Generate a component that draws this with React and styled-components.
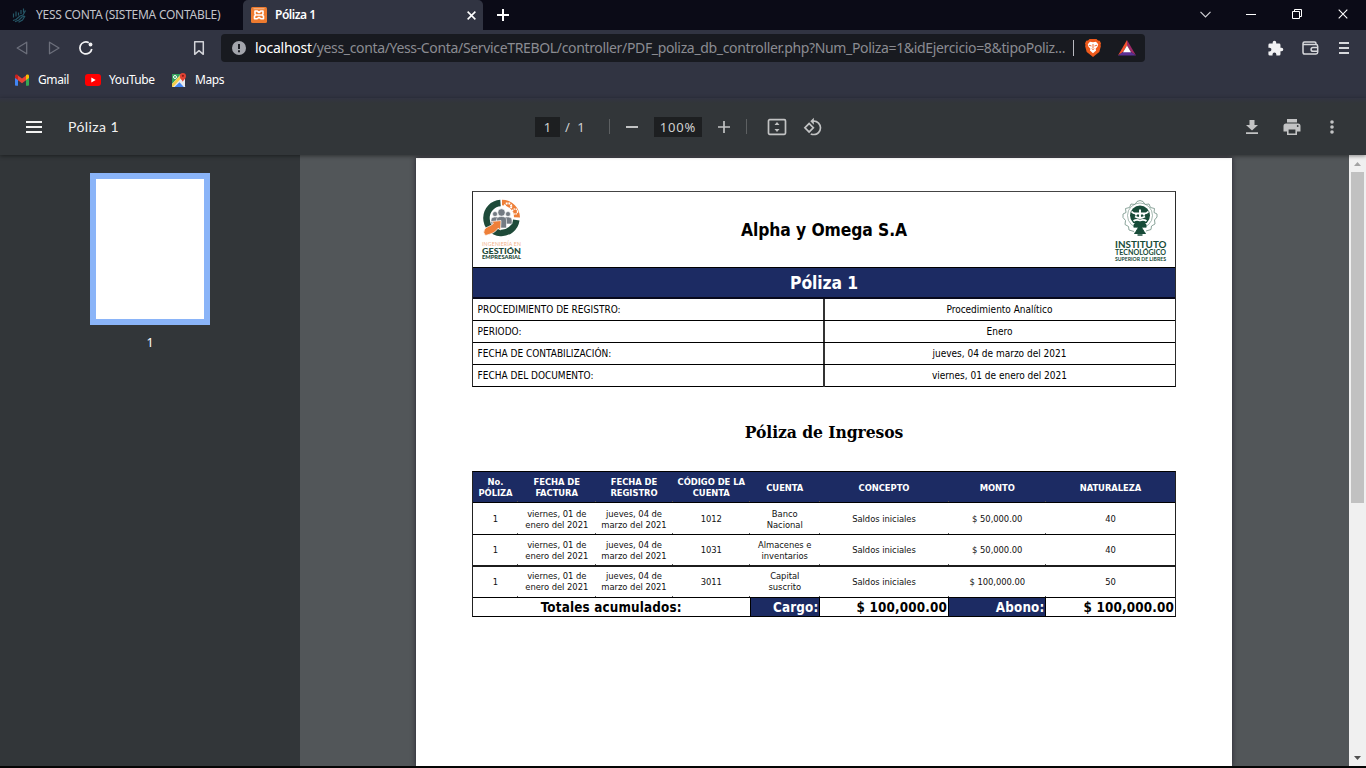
import React from "react";
import styled, { createGlobalStyle } from "styled-components";

const Global = createGlobalStyle`
  *, *::before, *::after { box-sizing: border-box; }
  html, body { margin: 0; padding: 0; overflow: hidden; background: #000; }
  svg { display: block; flex: none; }
`;

const NAVY = "#1c2b63";
const UI = `"Noto Sans", "Open Sans", sans-serif`;
const DOC = `"DejaVu Sans Condensed", "DejaVu Sans", sans-serif`;

const Window = styled.div`
  width: 1366px;
  height: 768px;
  display: flex;
  flex-direction: column;
  overflow: hidden;
  background: #000;
  font-family: ${UI};
  font-size: 12px;
  color: #fff;
  border-bottom: 2px solid #050505;
`;

/* Tab strip */
const TabStrip = styled.div`
  flex: none;
  display: flex;
  height: 30px;
  background: #0b0b17;
`;
const Tab = styled.div`
  display: flex;
  align-items: center;
  width: ${(p) => (p.$active ? 240 : 243)}px;
  padding: 0 ${(p) => (p.$active ? "7px 0 8px" : "0 0 12px")};
  gap: 8px;
  background: ${(p) => (p.$active ? "#313442" : "transparent")};
  border-radius: 5px 5px 0 0;
  color: ${(p) => (p.$active ? "#fff" : "#c3c4ca")};
`;
const TabTitle = styled.span`
  flex: 1;
  margin-top: -1px;
  white-space: nowrap;
  font-weight: ${(p) => (p.$active ? 600 : 400)};
  letter-spacing: ${(p) => p.$track || 0}px;
`;
const NewTab = styled.div`
  padding: 9px 0 0 14px;
  flex: 1;
`;
const WindowControls = styled.div`
  display: flex;
  align-items: center;
  > div {
    width: 46px;
    display: flex;
    justify-content: center;
    padding-bottom: 2px;
  }
`;

/* Navigation row */
const NavBar = styled.div`
  flex: none;
  display: flex;
  align-items: center;
  height: 36px;
  background: #313442;
`;
const NavButtons = styled.div`
  display: flex;
  align-items: center;
  width: 221px;
  padding: 0 15px 0 14px;
  gap: 16px;
`;
const Spacer = styled.div`
  flex: 1;
`;
const AddressBar = styled.div`
  display: flex;
  align-items: center;
  width: 924px;
  height: 28px;
  padding: 0 9px 0 11px;
  background: #181a20;
  border-radius: 4px;
`;
const Url = styled.div`
  flex: 1;
  margin-left: 9px;
  margin-top: -1px;
  white-space: nowrap;
  font-size: 14px;
  letter-spacing: -0.342px;
  color: #8b8c92;
  b { color: #fff; font-weight: 400; letter-spacing: -0.26px; }
`;
const UrlDivider = styled.div`
  width: 1px;
  height: 16px;
  margin-right: 11px;
  background: #b9bac0;
`;
const ShieldButton = styled.div`
  margin-right: 17px;
`;
const ExtensionIcons = styled.div`
  flex: 1;
  display: flex;
  align-items: center;
  justify-content: flex-end;
  padding-right: 17px;
  gap: 18px;
`;
const WalletButton = styled.div`
  margin-right: 2px;
`;

/* Bookmarks row */
const Bookmarks = styled.div`
  flex: none;
  display: flex;
  height: 32px;
  padding: 0 0 5px 14px;
  background: #313442;
`;
const Bookmark = styled.div`
  display: flex;
  align-items: center;
  width: ${(p) => p.$w}px;
  gap: 8px;
  letter-spacing: -0.4px;
`;

/* PDF toolbar */
const PdfToolbar = styled.div`
  flex: none;
  position: relative;
  z-index: 2;
  display: flex;
  align-items: center;
  height: 57px;
  background: linear-gradient(#323442, #323639 5px);
  box-shadow: 0 1px 4px rgba(0, 0, 0, 0.45);
  color: #d0d1d2;
`;
const PdfTitle = styled.div`
  display: flex;
  align-items: center;
  width: 535px;
  padding-left: 26px;
  gap: 26px;
  color: #f1f1f1;
  font-family: Lato, sans-serif;
  font-size: 14px;
  letter-spacing: 0.42px;
`;
const PdfControls = styled.div`
  flex: 1;
  display: flex;
  align-items: center;
  font-family: "Noto Sans", sans-serif;
  font-size: 13px;
`;
const PdfField = styled.div`
  width: ${(p) => p.$w}px;
  height: 20px;
  line-height: 20px;
  text-align: center;
  background: #1d1f21;
  letter-spacing: ${(p) => p.$track || 0}px;
`;
const PageCount = styled.div`
  width: 49px;
  padding-left: 5px;
  word-spacing: 4px;
`;
const PdfDivider = styled.div`
  width: 1px;
  height: 15px;
  background: #5d6062;
`;
const ControlGroup = styled.div`
  display: flex;
  align-items: center;
  justify-content: space-between;
  width: ${(p) => p.$w}px;
  padding: 0 ${(p) => p.$pad};
`;
const PdfActions = styled.div`
  display: grid;
  grid-template-columns: repeat(3, 40px);
  align-items: center;
  justify-items: center;
  padding-right: 14px;
`;

/* Body */
const Body = styled.div`
  flex: 1;
  min-height: 0;
  display: flex;
`;
const Sidebar = styled.div`
  width: 300px;
  padding-top: 18px;
  display: flex;
  flex-direction: column;
  align-items: center;
  background: #323639;
`;
const Thumbnail = styled.div`
  width: 120px;
  height: 152px;
  border: 6px solid #8ab4f8;
  background: #fff;
`;
const ThumbLabel = styled.div`
  margin-top: 9px;
  font-size: 12.5px;
  line-height: 17px;
`;
const Viewer = styled.div`
  flex: 1;
  display: flex;
  padding: 3px 0 0 116px;
  background: #525659;
`;
const Page = styled.div`
  width: 816px;
  padding: 33px 56px 0;
  background: #fff;
  color: #000;
  box-shadow: 0 0 5px rgba(20, 15, 30, 0.7);
  font-family: ${DOC};
`;
const Scrollbar = styled.div`
  width: 17px;
  display: flex;
  flex-direction: column;
  align-items: center;
  background: #f0f0f0;
`;
const ScrollThumb = styled.div`
  width: 13px;
  height: 331px;
  margin-bottom: auto;
  background: #c1c1c1;
`;
const ScrollArrow = styled.div`
  height: 17px;
  display: flex;
  align-items: center;
`;

/* Summary table */
const Summary = styled.div`
  height: 196px;
  border: 1px solid #2b2b2b;
  border-top-color: #444;
  border-bottom-color: #000;
`;
const LogoRow = styled.div`
  display: flex;
  align-items: flex-start;
  justify-content: space-between;
  height: 75px;
  padding: 0 7px;
`;
const GestionBox = styled.div`
  width: 54px;
  padding-top: 4px;
`;
const InstitutoBox = styled.div`
  padding-top: 4px;
`;
const Company = styled.div`
  font-size: 17.33px;
  font-weight: 700;
  line-height: 20px;
  letter-spacing: -0.1px;
  padding-top: 28px;
`;
const PolicyBand = styled.div`
  height: 32px;
  border-top: 1px solid #000;
  border-bottom: 2px solid #08091c;
  background: ${NAVY};
  color: #fff;
  font-size: 17.33px;
  font-weight: 700;
  line-height: 31px;
  letter-spacing: -0.1px;
  text-align: center;
`;
const SummaryRow = styled.div`
  display: flex;
  height: 22px;
  border-bottom: ${(p) => (p.$last ? "0" : "1px solid #000")};
  font-size: 10px;
  line-height: 22px;
`;
const SummaryLabel = styled.div`
  width: 352px;
  padding-left: 4.6px;
  border-right: 2px solid #333;
`;
const SummaryValue = styled.div`
  flex: 1;
  padding-right: 1px;
  text-align: center;
`;
const Heading = styled.h1`
  margin: 33px 0 27px;
  font-family: "DejaVu Serif Condensed", "DejaVu Serif", serif;
  font-size: 17.33px;
  font-weight: 700;
  line-height: 24px;
  letter-spacing: -0.07px;
  text-align: center;
`;

/* Entries table */
const Entries = styled.div`
  border: 1px solid #222;
  border-top-color: #000;
  border-bottom-color: #000;
`;
const EntryRow = styled.div`
  display: grid;
  grid-template-columns: 45px 77.5px 77px 77.5px 69.5px 129px 97.5px 129px;
  height: ${(p) => p.$h}px;
  border-bottom: ${(p) => p.$line || 1}px solid ${(p) => (p.$line === 2 ? "#1c1c1c" : "#000")};
  background: ${(p) => (p.$head ? NAVY : "#fff")};
  color: ${(p) => (p.$head ? "#fff" : "#111")};
  font-weight: ${(p) => (p.$head ? 700 : 400)};
  font-size: 9.33px;
  line-height: 11px;
  letter-spacing: -0.04px;
`;
const EntryCell = styled.div`
  position: relative;
  display: flex;
  align-items: center;
  justify-content: center;
  text-align: center;
  white-space: pre-line;
  padding-bottom: ${(p) => p.$lift || 0}px;
  &:not(:last-child)::after {
    content: "";
    position: absolute;
    right: 0;
    bottom: 0;
    width: 1px;
    height: 1px;
    background: #555;
  }
`;
const TotalsRow = styled.div`
  display: grid;
  grid-template-columns: 278px 69px 129px 97px 129px;
  height: 18px;
  font-size: 13.33px;
  font-weight: 700;
  line-height: 20px;
  letter-spacing: 0.17px;
`;
const TotalCell = styled.div`
  height: 18px;
  padding-right: ${(p) => (p.$navy || p.$center ? 0.5 : 1)}px;
  text-align: ${(p) => (p.$center ? "center" : "right")};
  background: ${(p) => (p.$navy ? NAVY : "#fff")};
  color: ${(p) => (p.$navy ? "#fff" : "#000")};
  &:not(:last-child) { border-right: 1px solid #000; }
`;

const YessIcon = () => (
  <svg width="16" height="16" viewBox="0 0 16 16" fill="none" stroke="#255666" strokeWidth="1.200">
    <path d="M1.500 6.500v4M4 4.500v5M6.500 5.500v3M9 3v4M11.500 1.500v4M1 13.500l3-1 4-3.500 3-1 2.500-4.500M3 14.700l4-1.700 3-3 2.500-1M6.500 15.300l4-2.300 2.500-4" />
  </svg>
);
const XamppIcon = () => (
  <svg width="16" height="16" viewBox="0 0 16 16">
    <rect width="16" height="16" rx="1.500" fill="#ee7b2f" />
    <path d="M2.500 1.800h11" stroke="#f8c9a4" strokeWidth=".9" />
    <path d="M4 4h2l2 1.500L10 4h2v3l-1 1 1.500 1.200v2.600H10.200L8 10.300l-2.200 1.500H3.500V9.200L5 8 4 7zM5.500 8h5" fill="none" stroke="#fff" strokeWidth="1.600" strokeLinejoin="round" />
  </svg>
);
const Cross = ({ size, w }) => (
  <svg width={size} height={size} viewBox="0 0 10 10" stroke="#fff" strokeWidth={w}>
    <path d="M.7.7l8.600 8.600M9.300.7L.7 9.300" />
  </svg>
);
const BackIcon = ({ flip }) => (
  <svg width="16" height="16" viewBox="0 0 16 16" fill="none" stroke="#6c6f7b" strokeWidth="1.300" strokeLinejoin="round">
    <path d={flip ? "M3.500 2.200v11.600L13 8z" : "M12.700 2.200v11.600L3.200 8z"} />
  </svg>
);
const ReloadIcon = () => (
  <svg width="16" height="16" viewBox="0 0 16 16" fill="none" stroke="#f2f2f4" strokeWidth="1.700">
    <path d="M10.800 2.700A6 6 0 1 0 13.800 9" />
    <circle cx="12.500" cy="4.500" r="1.900" fill="#f2f2f4" stroke="none" />
  </svg>
);
const BookmarkIcon = () => (
  <svg width="14" height="16" viewBox="0 0 14 16" fill="none" stroke="#d3d4d9" strokeWidth="1.500" strokeLinejoin="round">
    <path d="M2.700 1.700h8.600v12.600L7 10.700l-4.300 3.600z" />
  </svg>
);
const InfoIcon = () => (
  <svg width="14" height="14" viewBox="0 0 14 14">
    <circle cx="7" cy="7" r="7" fill="#a3a5ac" />
    <path d="M7 3v5M7 9.300v2" stroke="#181a20" strokeWidth="1.900" />
  </svg>
);
const BraveIcon = () => (
  <svg width="16" height="18" viewBox="0 0 16 18">
    <path d="M4.500 0h7l1.500 1.500 1.800.2 1.200 2.800-.5 1.500.4 1-1.600 6L12 14.700 8 18l-4-3.300L1.700 13 .1 7l.4-1L0 4.500l1.200-2.800L3 1.500z" fill="#ee5a1c" />
    <path d="M5 2.700l3 .6 3-.6 2.200 2.600-.6 2.200-2 2.300.5 1.700L8 14.300l-3.100-2.800.5-1.700-2-2.300-.6-2.200z" fill="#fff" />
    <path d="M3.900 6.200l2.600.8M12.100 6.200l-2.600.8M8 5v4M6.700 9.700L8 10.500l1.300-.8" stroke="#ee5a1c" strokeWidth=".9" fill="none" />
  </svg>
);
const BatIcon = () => (
  <svg width="18" height="16" viewBox="0 0 18 16">
    <path d="M9 0v5.500L5 12l-5 3.500z" fill="#f4522e" />
    <path d="M9 0l9 15.500L13 12 9 5.500z" fill="#9e2a66" />
    <path d="M0 15.500L5 12h8l5 3.500z" fill="#5b2f94" />
    <path d="M9 5.500l4 6.800H5z" fill="#fff" />
  </svg>
);
const PuzzleIcon = () => (
  <svg width="17" height="17" viewBox="0 0 24 24" fill="#f1f1f3">
    <path d="M20.500 11H19V7a2 2 0 0 0-2-2h-4V3.500a2.500 2.500 0 0 0-5 0V5H4a2 2 0 0 0-2 2v3.800h1.500a2.700 2.700 0 0 1 0 5.400H2V20a2 2 0 0 0 2 2h3.800v-1.500a2.700 2.700 0 0 1 5.400 0V22H17a2 2 0 0 0 2-2v-4h1.500a2.500 2.500 0 0 0 0-5z" />
  </svg>
);
const WalletIcon = () => (
  <svg width="17" height="14" viewBox="0 0 17 14" fill="none" stroke="#d7d8dc" strokeWidth="1.500">
    <path d="M14 3.500V2.500q0-1.500-1.500-1.500H2.500Q1 1 1 2.500v8.700Q1 13 2.800 13H14q1.700 0 1.700-1.700V5.200Q15.700 3.500 14 3.500H1.500" />
    <path d="M16 6.500h-5a1.900 1.900 0 0 0 0 3.800h5" />
  </svg>
);
const Lines = ({ w, h, gap, c, t }) => (
  <svg width={w} height={h} viewBox={`0 0 ${w} ${h}`} fill={c}>
    <rect width={w} height={t} />
    <rect y={gap} width={w} height={t} />
    <rect y={gap * 2} width={w} height={t} />
  </svg>
);
const GmailIcon = () => (
  <svg width="16" height="16" viewBox="0 0 16 16">
    <path d="M1 4v9q0 .8.800.8H4V7z" fill="#4285f4" />
    <path d="M15 4v9q0 .8-.8.800H12V7z" fill="#34a853" />
    <path d="M4 3.500l4 3 4-3v4.700l-4 3-4-3z" fill="#ea4335" />
    <path d="M1 4a1.600 1.600 0 0 1 2.600-1.200L4 3.100v5L1 5.900z" fill="#c5221f" />
    <path d="M15 4a1.600 1.600 0 0 0-2.600-1.200L12 3.100v5l3-2.200z" fill="#fbbc04" />
  </svg>
);
const YouTubeIcon = () => (
  <svg width="16" height="16" viewBox="0 0 16 16">
    <rect y="2" width="16" height="12" rx="3" fill="#f00" />
    <path d="M6.300 5.500v5L10.700 8z" fill="#fff" />
  </svg>
);
const MapsIcon = () => (
  <svg width="16" height="16" viewBox="0 0 16 16">
    <path d="M1 2h13v13H1z" fill="#e8eaed" />
    <path d="M1 2h9L1 12z" fill="#34a05a" />
    <path d="M1 12L10.500 2 12 4 2.500 15H1z" fill="#f5ce4b" />
    <path d="M2 15l6.500-6 6 6z" fill="#e8eaed" />
    <path d="M3.500 15L8.500 10.300l4.300 4.700z" fill="#4285f4" />
    <circle cx="4" cy="5" r="1.500" fill="none" stroke="#fff" />
    <path d="M11.800 10c-.3-2-3-3-3-6a3.100 3.100 0 0 1 6.200 0c0 3-2.900 4-3.200 6z" fill="#e24334" />
    <circle cx="11.900" cy="3.800" r="1.100" fill="#8c1d18" />
  </svg>
);
const FitIcon = () => (
  <svg width="20" height="18" viewBox="0 0 20 18" fill="none" stroke="#c2c3c4" strokeWidth="1.700">
    <rect x="1.500" y="1.700" width="17" height="14.600" rx="1.200" />
    <path d="M10 4l2.500 3h-5zM10 14l2.500-3h-5z" fill="#c2c3c4" stroke="none" />
  </svg>
);
const RotateIcon = () => (
  <svg width="20" height="20" viewBox="0 0 24 24" fill="#c2c3c4">
    <path d="M7.340 6.410L.86 12.900l6.490 6.480 6.490-6.480-6.500-6.490zM3.690 12.900l3.660-3.660L11 12.900l-3.660 3.660-3.650-3.660zm15.670-6.260A8.950 8.950 0 0 0 13 4V.760L8.760 5 13 9.240V6c1.790 0 3.580.68 4.950 2.050a7.007 7.007 0 0 1 0 9.900 6.973 6.973 0 0 1-7.790 1.440l-1.490 1.490C10.020 21.620 11.510 22 13 22c2.300 0 4.610-.88 6.360-2.640a8.980 8.980 0 0 0 0-12.720z" />
  </svg>
);
const DownloadIcon = () => (
  <svg width="16" height="16" viewBox="0 0 16 16" fill="#c2c3c4">
    <path d="M5.500 1h5v5H14l-6 5.600L2 6h3.500zM2 13.300h12V15H2z" />
  </svg>
);
const PrintIcon = () => (
  <svg width="18" height="16" viewBox="0 0 18 16" fill="#c2c3c4">
    <path d="M4 0h10v3.500H4zM3 4.500h12a2.500 2.500 0 0 1 2.500 2.500v5.500H14V9H4v3.500H.5V7A2.500 2.500 0 0 1 3 4.500z" />
    <path d="M4.800 9.800h8.400v5.400H4.800z" fill="none" stroke="#c2c3c4" strokeWidth="1.600" />
    <circle cx="14.700" cy="7" r=".9" fill="#323639" />
  </svg>
);
const MoreIcon = () => (
  <svg width="4" height="14" viewBox="0 0 4 14" fill="#c2c3c4">
    <circle cx="2" cy="2" r="1.800" />
    <circle cx="2" cy="7" r="1.800" />
    <circle cx="2" cy="12" r="1.800" />
  </svg>
);
const GestionLogo = () => (
  <svg width="44" height="64" viewBox="0 0 44 64">
    <path d="M20.500 7a15 15 0 1 0 15.800 17" fill="none" stroke="#1e4a39" strokeWidth="6.500" />
    <path d="M22 3.700A18 18 0 0 1 40 21.500l-6-.2a12 12 0 0 0-12-12z" fill="#ee7f38" />
    <g fill="none" stroke="#fff">
      <circle cx="28" cy="10.500" r="3.300" strokeWidth="2" strokeDasharray="1.700 .9" />
      <circle cx="35" cy="15.500" r="2.600" strokeWidth="1.400" strokeDasharray="1.400 .7" />
    </g>
    <g fill="#747b83" stroke="#fff" strokeWidth=".6">
      <circle cx="15" cy="18" r="2.500" />
      <circle cx="28" cy="18" r="2.500" />
      <path d="M11 28v-4q0-3 3.500-3h14q3.500 0 3.500 3v4z" />
      <circle cx="21.500" cy="16.500" r="3.700" />
      <path d="M16.500 32v-8q0-3.500 5-3.500t5 3.500v8z" />
    </g>
    <path d="M5.500 39.500q-3-3-1-6 1-2 4-3 3.500-1 5-3.500l-2-1.500 9.500-1-.5 9.500-2.300-1.800q-2 3-5.200 4.800-4 1.500-7.500 2.500z" fill="#ee7f38" stroke="#fff" strokeWidth=".7" />
    <g fontFamily="Lato, sans-serif">
      <text x="2" y="50" fontSize="5.200" textLength="39" fill="#f2b48c">INGENIERÍA EN</text>
      <text x="2" y="58" fontSize="7.800" fontWeight="900" textLength="39" lengthAdjust="spacingAndGlyphs" fill="#1e4a39">GESTIÓN</text>
      <text x="2" y="63" fontSize="4.800" fontWeight="900" textLength="39" lengthAdjust="spacingAndGlyphs" fill="#1e4a39">EMPRESARIAL</text>
    </g>
  </svg>
);
const InstitutoLogo = () => (
  <svg width="54" height="66" viewBox="0 0 54 66">
    <g fill="none" stroke="#7d9a8e">
      <path d="M20 35.500l-5-1.500-.5-3.500-3.500-2 .5-4-2.500-3v-3.500l3-1.500-.5-4 4-1 1.500-3.500 4 .5 2-3 3-1 3 1 2 3 4-.5 1.500 3.500 4 1-.5 4 3 1.500V21l-2.500 3 .5 4-3.500 2-.5 3.500-5 1.500" strokeWidth=".9" />
      <circle cx="26" cy="19.500" r="12.500" strokeWidth=".7" />
    </g>
    <circle cx="26" cy="19.500" r="10" fill="#174b38" />
    <path d="M17.500 15.500q2 2.500 5 2h7q3 .5 5-2M26 13.500v8M21 20.500q5 3 10 0M19.500 25q3-2 6.500-.5 3.500-1.500 6.500.5M22 16.500v3M30 16.500v3" fill="none" stroke="#fff" strokeWidth="1.900" />
    <path d="M20 31.500v-3h12v3M26 29l4 6.500 1.500 2h-11l1.500-2z" fill="#174b38" stroke="#174b38" />
    <path d="M23.500 39h5" stroke="#174b38" strokeWidth="1.500" />
    <g fontFamily="Lato, sans-serif" fill="#174b38">
      <text x="1" y="52" fontSize="9.500" fontWeight="700" textLength="51.500" lengthAdjust="spacingAndGlyphs">INSTITUTO</text>
      <text x="1" y="59" fontSize="7.400" fontWeight="700" textLength="51" lengthAdjust="spacingAndGlyphs">TECNOLÓGICO</text>
      <text x="1" y="65" fontSize="5.200" fontWeight="700" textLength="51" lengthAdjust="spacingAndGlyphs">SUPERIOR DE LIBRES</text>
    </g>
  </svg>
);
const Arrow = ({ down }) => (
  <svg width="7" height="4" viewBox="0 0 7 4" fill={down ? "#505050" : "#a3a3a3"}>
    <path d={down ? "M0 0h7L3.500 4z" : "M0 4h7L3.500 0z"} />
  </svg>
);

const details = [
  ["PROCEDIMIENTO DE REGISTRO:", "Procedimiento Analítico"],
  ["PERIODO:", "Enero"],
  ["FECHA DE CONTABILIZACIÓN:", "jueves, 04 de marzo del 2021"],
  ["FECHA DEL DOCUMENTO:", "viernes, 01 de enero del 2021"],
];
const columns = ["No.\nPÓLIZA", "FECHA DE\nFACTURA", "FECHA DE\nREGISTRO", "CÓDIGO DE LA\nCUENTA", "CUENTA", "CONCEPTO", "MONTO", "NATURALEZA"];
const invoice = "viernes, 01 de\nenero del 2021";
const register = "jueves, 04 de\nmarzo del 2021";
const entries = [
  { h: 32, line: 1, lift: 0, cells: ["1", invoice, register, "1012", "Banco\nNacional", "Saldos iniciales", "$ 50,000.00", "40"] },
  { h: 32, line: 2, lift: 1, cells: ["1", invoice, register, "1031", "Almacenes e\ninventarios", "Saldos iniciales", "$ 50,000.00", "40"] },
  { h: 31, line: 1, lift: 2, cells: ["1", invoice, register, "3011", "Capital\nsuscrito", "Saldos iniciales", "$ 100,000.00", "50"] },
];

export default function App() {
  return (
    <Window>
      <Global />
      <TabStrip>
        <Tab>
          <YessIcon />
          <TabTitle $track={-0.26}>YESS CONTA (SISTEMA CONTABLE)</TabTitle>
        </Tab>
        <Tab $active>
          <XamppIcon />
          <TabTitle $active $track={-0.48}>Póliza 1</TabTitle>
          <Cross size={9} w={1.7} />
        </Tab>
        <NewTab>
          <svg width="12" height="12" viewBox="0 0 12 12" stroke="#fff" strokeWidth="2">
            <path d="M6 0v12M0 6h12" />
          </svg>
        </NewTab>
        <WindowControls>
          <div>
            <svg width="11" height="7" viewBox="0 0 11 7" fill="none" stroke="#d0d0d5" strokeWidth="1.200">
              <path d="M.5.8l5 5 5-5" />
            </svg>
          </div>
          <div>
            <svg width="10" height="1"><rect width="10" height="1" fill="#fff" /></svg>
          </div>
          <div>
            <svg width="10" height="10" viewBox="0 0 10 10" fill="none" stroke="#fff">
              <path d="M.5 2.500h7v7h-7zM2.500 2.500v-2h7v7h-2" />
            </svg>
          </div>
          <div><Cross size={10} w={1.1} /></div>
        </WindowControls>
      </TabStrip>

      <NavBar>
        <NavButtons>
          <BackIcon />
          <BackIcon flip />
          <ReloadIcon />
          <Spacer />
          <BookmarkIcon />
        </NavButtons>
        <AddressBar>
          <InfoIcon />
          <Url><b>localhost</b>/yess_conta/Yess-Conta/ServiceTREBOL/controller/PDF_poliza_db_controller.php?Num_Poliza=1&amp;idEjercicio=8&amp;tipoPoliz...</Url>
          <UrlDivider />
          <ShieldButton><BraveIcon /></ShieldButton>
          <BatIcon />
        </AddressBar>
        <ExtensionIcons>
          <PuzzleIcon />
          <WalletButton><WalletIcon /></WalletButton>
          <Lines w={10} h={12} gap={5} t={2} c="#d7d8dc" />
        </ExtensionIcons>
      </NavBar>

      <Bookmarks>
        <Bookmark $w={71}><GmailIcon />Gmail</Bookmark>
        <Bookmark $w={86}><YouTubeIcon />YouTube</Bookmark>
        <Bookmark $w={80}><MapsIcon />Maps</Bookmark>
      </Bookmarks>

      <PdfToolbar>
        <PdfTitle>
          <Lines w={16} h={12} gap={5} t={2} c="#f1f1f1" />
          Póliza 1
        </PdfTitle>
        <PdfControls>
          <PdfField $w={25}>1</PdfField>
          <PageCount>/ 1</PageCount>
          <PdfDivider />
          <ControlGroup $w={136} $pad="16px">
            <svg width="12" height="2"><rect width="12" height="2" fill="#c2c3c4" /></svg>
            <PdfField $w={48} $track={0.8}>100%</PdfField>
            <svg width="12" height="12" viewBox="0 0 12 12" stroke="#c2c3c4" strokeWidth="1.700">
              <path d="M6 0v12M0 6h12" />
            </svg>
          </ControlGroup>
          <PdfDivider />
          <ControlGroup $w={96} $pad="20px"><FitIcon /><RotateIcon /></ControlGroup>
        </PdfControls>
        <PdfActions>
          <DownloadIcon />
          <PrintIcon />
          <MoreIcon />
        </PdfActions>
      </PdfToolbar>

      <Body>
        <Sidebar>
          <Thumbnail />
          <ThumbLabel>1</ThumbLabel>
        </Sidebar>
        <Viewer>
          <Page>
            <Summary>
              <LogoRow>
                <GestionBox><GestionLogo /></GestionBox>
                <Company>Alpha y Omega S.A</Company>
                <InstitutoBox><InstitutoLogo /></InstitutoBox>
              </LogoRow>
              <PolicyBand>Póliza 1</PolicyBand>
              {details.map(([label, value], i) => (
                <SummaryRow key={label} $last={i === details.length - 1}>
                  <SummaryLabel>{label}</SummaryLabel>
                  <SummaryValue>{value}</SummaryValue>
                </SummaryRow>
              ))}
            </Summary>
            <Heading>Póliza de Ingresos</Heading>
            <Entries>
              <EntryRow $head $h={31}>
                {columns.map((c) => <EntryCell key={c}>{c}</EntryCell>)}
              </EntryRow>
              {entries.map((row, i) => (
                <EntryRow key={i} $h={row.h} $line={row.line}>
                  {row.cells.map((c, j) => <EntryCell key={j} $lift={row.lift}>{c}</EntryCell>)}
                </EntryRow>
              ))}
              <TotalsRow>
                <TotalCell $center>Totales acumulados:</TotalCell>
                <TotalCell $navy>Cargo:</TotalCell>
                <TotalCell>$ 100,000.00</TotalCell>
                <TotalCell $navy>Abono:</TotalCell>
                <TotalCell>$ 100,000.00</TotalCell>
              </TotalsRow>
            </Entries>
          </Page>
        </Viewer>
        <Scrollbar>
          <ScrollArrow><Arrow /></ScrollArrow>
          <ScrollThumb />
          <ScrollArrow><Arrow down /></ScrollArrow>
        </Scrollbar>
      </Body>
    </Window>
  );
}
